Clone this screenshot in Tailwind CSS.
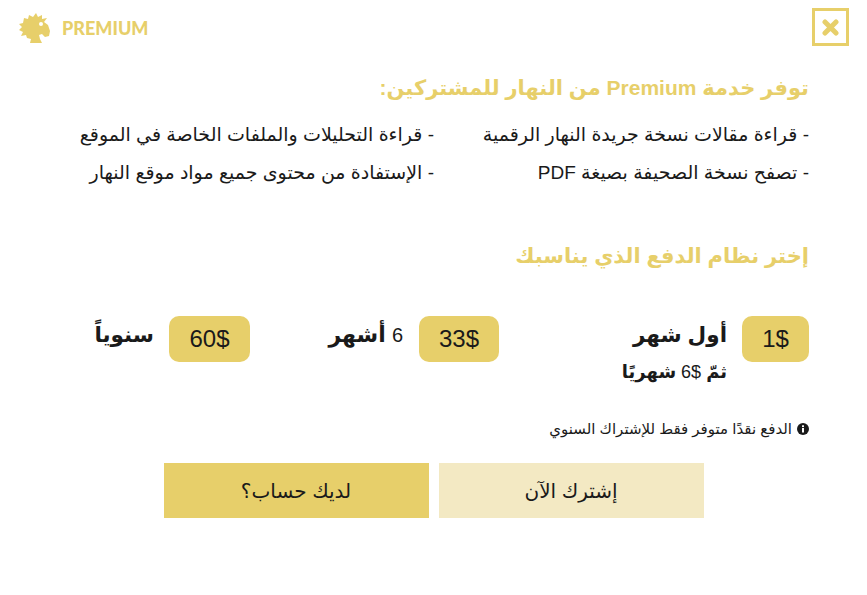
<!DOCTYPE html>
<html lang="ar" dir="rtl">
<head>
    <meta charset="UTF-8">
    <title>Premium</title>
    <script src="https://cdn.jsdelivr.net/npm/@tailwindcss/browser@4"></script>
</head>
<body class="bg-white font-['Liberation_Sans','DejaVu_Sans',sans-serif] text-[#1a1a1a] w-[867px] h-[595px] overflow-hidden">
    <header class="flex justify-between items-start px-[18px] pt-[8px] h-[62px]" dir="ltr">
        <div class="flex items-center gap-[11px] pt-[4px]">
            <svg width="33" height="32" viewBox="0 0 33 32">
                <path fill="#e7cf6a" d="M6 6 L10 7 L11 3 L15 5 L18 1 L20 5 L24 3 L24 7 L29 6 L26 10 L30 13 L32 19 L31 24 L27 25 L24 22 L21 23 L22 27 L24 31 L12 31 L13 27 L9 26 L8 23 L3 24 L5 20 L1 18 L4 15 L1 12 L5 11 Z"/>
                <circle cx="23" cy="12" r="2" fill="#fff"/>
            </svg>
            <span class="font-['Lato',sans-serif] font-black text-[18px] text-[#e7cf6a]">PREMIUM</span>
        </div>
        <button class="w-[37px] h-[38px] border-[3px] border-[#e7cf6a] flex items-center justify-center">
            <svg width="17" height="17" viewBox="0 0 17 17"><path d="M3 3 L14 14 M14 3 L3 14" stroke="#e7cf6a" stroke-width="5" stroke-linecap="round"/></svg>
        </button>
    </header>
    <main class="px-[58px]">
        <h2 class="font-bold text-[21px] leading-[30px] text-[#e7cf6a] mt-[11px]">توفر خدمة Premium من النهار للمشتركين:</h2>
        <div class="grid grid-cols-[375px_1fr] mt-[13px] text-[19px] leading-[38px]">
            <p>- قراءة مقالات نسخة جريدة النهار الرقمية</p>
            <p>- قراءة التحليلات والملفات الخاصة في الموقع</p>
            <p>- تصفح نسخة الصحيفة بصيغة PDF</p>
            <p>- الإستفادة من محتوى جميع مواد موقع النهار</p>
        </div>
        <h2 class="font-bold text-[21px] leading-[30px] text-[#e7cf6a] mt-[49px]">إختر نظام الدفع الذي يناسبك</h2>
        <div class="grid grid-cols-[310px_249px_1fr] mt-[45px]">
            <div class="flex items-start gap-[15px]">
                <span class="w-[67px] h-[46px] bg-[#e7cf6a] rounded-[10px] flex items-center justify-center text-[24px]">1$</span>
                <div>
                    <p class="font-bold text-[21.5px] leading-[38px]">أول شهر</p>
                    <p class="font-bold text-[18px] leading-[26px] mt-[5px]">ثمّ <span class="font-normal">$6</span> شهريًا</p>
                </div>
            </div>
            <div class="flex items-start gap-[16px]">
                <span class="w-[80px] h-[46px] bg-[#e7cf6a] rounded-[10px] flex items-center justify-center text-[24px]">33$</span>
                <p class="font-bold text-[22px] leading-[38px]"><span class="font-normal text-[20px]">6</span> أشهر</p>
            </div>
            <div class="flex items-start gap-[15px]">
                <span class="w-[81px] h-[46px] bg-[#e7cf6a] rounded-[10px] flex items-center justify-center text-[24px]">60$</span>
                <p class="font-bold text-[21.5px] leading-[38px]">سنوياً</p>
            </div>
        </div>
        <p class="flex items-center gap-[5px] text-[15px] leading-[20px] mt-[34px]">
            <svg width="12" height="12" viewBox="0 0 12 12"><circle cx="6" cy="6" r="6" fill="#1a1a1a"/><rect x="5" y="5" width="2" height="4.5" fill="#fff"/><rect x="5" y="2.3" width="2" height="1.8" fill="#fff"/></svg>
            <span>الدفع نقدًا متوفر فقط للإشتراك السنوي</span>
        </p>
    </main>
    <div class="flex justify-center gap-[10px] mt-[24px]">
        <button class="w-[265px] h-[55px] bg-[#f3e9c3] text-[20px]">إشترك الآن</button>
        <button class="w-[265px] h-[55px] bg-[#e7cf6a] text-[20px]">لديك حساب؟</button>
    </div>
</body>
</html>
